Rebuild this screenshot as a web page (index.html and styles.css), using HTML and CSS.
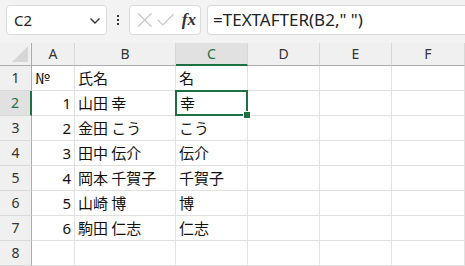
FILE: index.html
```html
<!DOCTYPE html>
<html lang="ja">
<head>
<meta charset="utf-8">
<link rel="stylesheet" href="styles.css">
</head>
<body>
<div class="toolbar">
  <div class="namebox">
    <span class="ref">C2</span>
    <svg class="chev" width="12" height="8" viewBox="0 0 12 8"><path d="M1.5 1.5 L6 6 L10.5 1.5" fill="none" stroke="#333" stroke-width="1.4"/></svg>
  </div>
  <div class="dots"><span></span><span></span><span></span></div>
  <div class="fxbox">
    <svg width="18" height="18" viewBox="0 0 18 18"><path d="M2 2 L16 16 M16 2 L2 16" stroke="#c8c8c8" stroke-width="1.3" fill="none"/></svg>
    <svg width="20" height="18" viewBox="0 0 20 18"><path d="M2 9 L7 14 L18 3" stroke="#c8c8c8" stroke-width="1.3" fill="none"/></svg>
    <span class="fx">fx</span>
  </div>
  <div class="formula">=TEXTAFTER(B2," ")</div>
</div>
<div class="sheet">
  <div class="corner"><svg width="16" height="16" viewBox="0 0 16 16"><path d="M16 0 L16 16 L0 16 Z" fill="#d6d6d6"/></svg></div>
  <div class="ch">A</div><div class="ch">B</div><div class="ch sel">C</div><div class="ch">D</div><div class="ch">E</div><div class="ch">F</div>

  <div class="rh">1</div><div class="c">№</div><div class="c">氏名</div><div class="c">名</div><div class="c"></div><div class="c"></div><div class="c"></div>
  <div class="rh sel">2</div><div class="c num">1</div><div class="c">山田 幸</div><div class="c active">幸<span class="handle"></span></div><div class="c"></div><div class="c"></div><div class="c"></div>
  <div class="rh">3</div><div class="c num">2</div><div class="c">金田 こう</div><div class="c">こう</div><div class="c"></div><div class="c"></div><div class="c"></div>
  <div class="rh">4</div><div class="c num">3</div><div class="c">田中 伝介</div><div class="c">伝介</div><div class="c"></div><div class="c"></div><div class="c"></div>
  <div class="rh">5</div><div class="c num">4</div><div class="c">岡本 千賀子</div><div class="c">千賀子</div><div class="c"></div><div class="c"></div><div class="c"></div>
  <div class="rh">6</div><div class="c num">5</div><div class="c">山崎 博</div><div class="c">博</div><div class="c"></div><div class="c"></div><div class="c"></div>
  <div class="rh">7</div><div class="c num">6</div><div class="c">駒田 仁志</div><div class="c">仁志</div><div class="c"></div><div class="c"></div><div class="c"></div>
  <div class="rh">8</div><div class="c"></div><div class="c"></div><div class="c"></div><div class="c"></div><div class="c"></div><div class="c"></div>
</div>
</body>
</html>
```
FILE: styles.css
```css
* { box-sizing: border-box; }
html, body { margin: 0; padding: 0; }
body {
  width: 465px;
  height: 266px;
  overflow: hidden;
  background: #f3f3f3;
  font-family: "Noto Sans", "Noto Sans CJK JP", sans-serif;
  color: #222;
}
.toolbar {
  height: 43px;
  display: flex;
  align-items: flex-start;
  padding: 5px 0 0 6px;
}
.namebox {
  width: 101px;
  height: 30px;
  background: #fff;
  border: 1px solid #dadada;
  border-radius: 4px;
  display: flex;
  align-items: center;
  justify-content: space-between;
  padding: 0 5px 0 7px;
}
.ref { font-size: 15px; color: #222; }
.chev { margin-top: 2px; }
.dots {
  width: 22px;
  height: 30px;
  display: flex;
  flex-direction: column;
  align-items: center;
  justify-content: center;
  gap: 2px;
}
.dots span { width: 2px; height: 2px; background: #333; display: block; }
.fxbox {
  width: 72px;
  height: 30px;
  background: #fff;
  border: 1px solid #dadada;
  border-radius: 4px;
  display: flex;
  align-items: center;
  padding: 0 4px 0 6px;
  gap: 3px;
}
.fx {
  font-family: "Liberation Serif", "DejaVu Serif", serif;
  font-style: italic;
  font-weight: bold;
  font-size: 17px;
  color: #333;
  margin-left: 3px;
}
.formula {
  flex: 1;
  height: 30px;
  margin-left: 6px;
  background: #fff;
  border: 1px solid #dadada;
  border-right: none;
  border-radius: 4px 0 0 4px;
  font-size: 17px;
  line-height: 28px;
  padding-left: 5px;
  color: #222;
}
.sheet {
  display: grid;
  grid-template-columns: 32px 43px 101px 72px 72px 72px 73px;
  grid-template-rows: 23px repeat(8, 25px);
  background: #fff;
}
.corner {
  background: #f0f0f0;
  border-right: 1px solid #acacac;
  border-bottom: 1px solid #acacac;
  display: flex;
  align-items: flex-end;
  justify-content: flex-end;
  padding: 0 3px 3px 0;
}
.ch {
  background: #f0f0f0;
  border-right: 1px solid #d8d8d8;
  border-bottom: 1px solid #acacac;
  text-align: center;
  font-size: 14px;
  line-height: 22px;
  color: #333;
}
.ch.sel {
  background: #e1e1e1;
  border-bottom: 2px solid #1e6f41;
  color: #1e6f41;
}
.rh {
  background: #f0f0f0;
  border-right: 1px solid #acacac;
  border-bottom: 1px solid #d8d8d8;
  text-align: center;
  font-size: 14px;
  line-height: 24px;
  color: #333;
}
.rh.sel {
  background: #e1e1e1;
  border-right: 2px solid #1e6f41;
  color: #1e6f41;
}
.c {
  border-right: 1px solid #e1e1e1;
  border-bottom: 1px solid #e1e1e1;
  font-family: "Noto Sans CJK JP", sans-serif;
  font-size: 15px;
  line-height: 24px;
  padding: 0 3px;
  white-space: nowrap;
  position: relative;
  color: #111;
}
.c.num { text-align: right; font-family: "Noto Sans", sans-serif; }
.c.active {
  border: 2px solid #1e6f41;
  margin: -1px 0 0 -1px;
  line-height: 21px;
  padding-left: 3px;
  z-index: 2;
}
.handle {
  position: absolute;
  right: -5px;
  bottom: -5px;
  width: 8px;
  height: 8px;
  background: #1e6f41;
  border: 1px solid #fff;
  z-index: 3;
}
```
